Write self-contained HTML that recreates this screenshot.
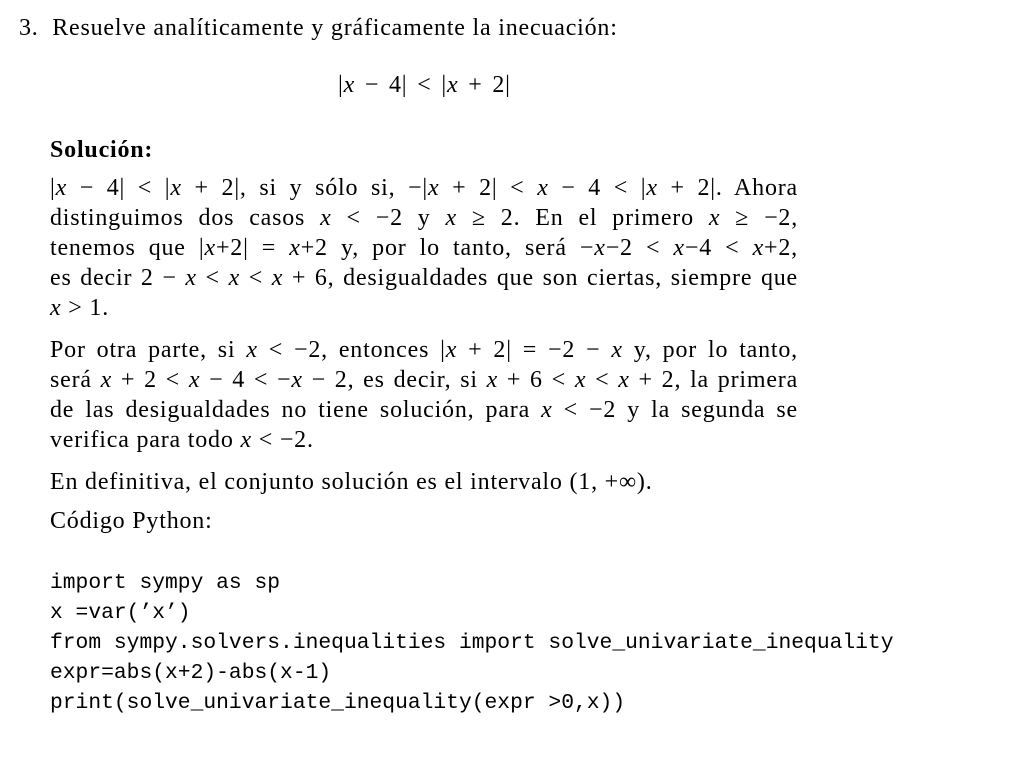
<!DOCTYPE html>
<html><head><meta charset="utf-8"><style>
body{margin:0;background:#fff;width:1010px;height:762px;position:relative;overflow:hidden;font-family:"Liberation Serif",serif;font-size:24px;letter-spacing:0.8px;color:#000}
.l{position:absolute;left:50px;white-space:nowrap;line-height:30px}
.j{width:748px;text-align:justify;text-align-last:justify;white-space:normal}
.c{font-family:"Liberation Mono",monospace;font-size:21.3px;letter-spacing:0}
i{font-style:italic}
</style></head><body>
<div class="l" style="left:19px;top:13px">3.&nbsp; Resuelve analíticamente y gráficamente la inecuación:</div>
<div class="l" style="left:338px;top:70px;word-spacing:3px">|<i>x</i> − 4| &lt; |<i>x</i> + 2|</div>
<div class="l" style="top:135px;font-weight:bold">Solución:</div>
<div class="l j" style="top:173px">|<i>x</i> − 4| &lt; |<i>x</i> + 2|, si y sólo si, −|<i>x</i> + 2| &lt; <i>x</i> − 4 &lt; |<i>x</i> + 2|. Ahora</div>
<div class="l j" style="top:203px">distinguimos dos casos <i>x</i> &lt; −2 y <i>x</i> ≥ 2. En el primero <i>x</i> ≥ −2,</div>
<div class="l j" style="top:233px">tenemos que |<i>x</i>+2| = <i>x</i>+2 y, por lo tanto, será −<i>x</i>−2 &lt; <i>x</i>−4 &lt; <i>x</i>+2,</div>
<div class="l j" style="top:263px">es decir 2 − <i>x</i> &lt; <i>x</i> &lt; <i>x</i> + 6, desigualdades que son ciertas, siempre que</div>
<div class="l" style="top:293px"><i>x</i> &gt; 1.</div>
<div class="l j" style="top:335px">Por otra parte, si <i>x</i> &lt; −2, entonces |<i>x</i> + 2| = −2 − <i>x</i> y, por lo tanto,</div>
<div class="l j" style="top:365px">será <i>x</i> + 2 &lt; <i>x</i> − 4 &lt; −<i>x</i> − 2, es decir, si <i>x</i> + 6 &lt; <i>x</i> &lt; <i>x</i> + 2, la primera</div>
<div class="l j" style="top:395px">de las desigualdades no tiene solución, para <i>x</i> &lt; −2 y la segunda se</div>
<div class="l" style="top:425px">verifica para todo <i>x</i> &lt; −2.</div>
<div class="l" style="top:467px">En definitiva, el conjunto solución es el intervalo (1, +∞).</div>
<div class="l" style="top:506px">Código Python:</div>
<div class="l c" style="top:568px">import sympy as sp</div>
<div class="l c" style="top:598px">x =var(’x’)</div>
<div class="l c" style="top:628px">from sympy.solvers.inequalities import solve_univariate_inequality</div>
<div class="l c" style="top:658px">expr=abs(x+2)-abs(x-1)</div>
<div class="l c" style="top:688px">print(solve_univariate_inequality(expr &gt;0,x))</div>
</body></html>
